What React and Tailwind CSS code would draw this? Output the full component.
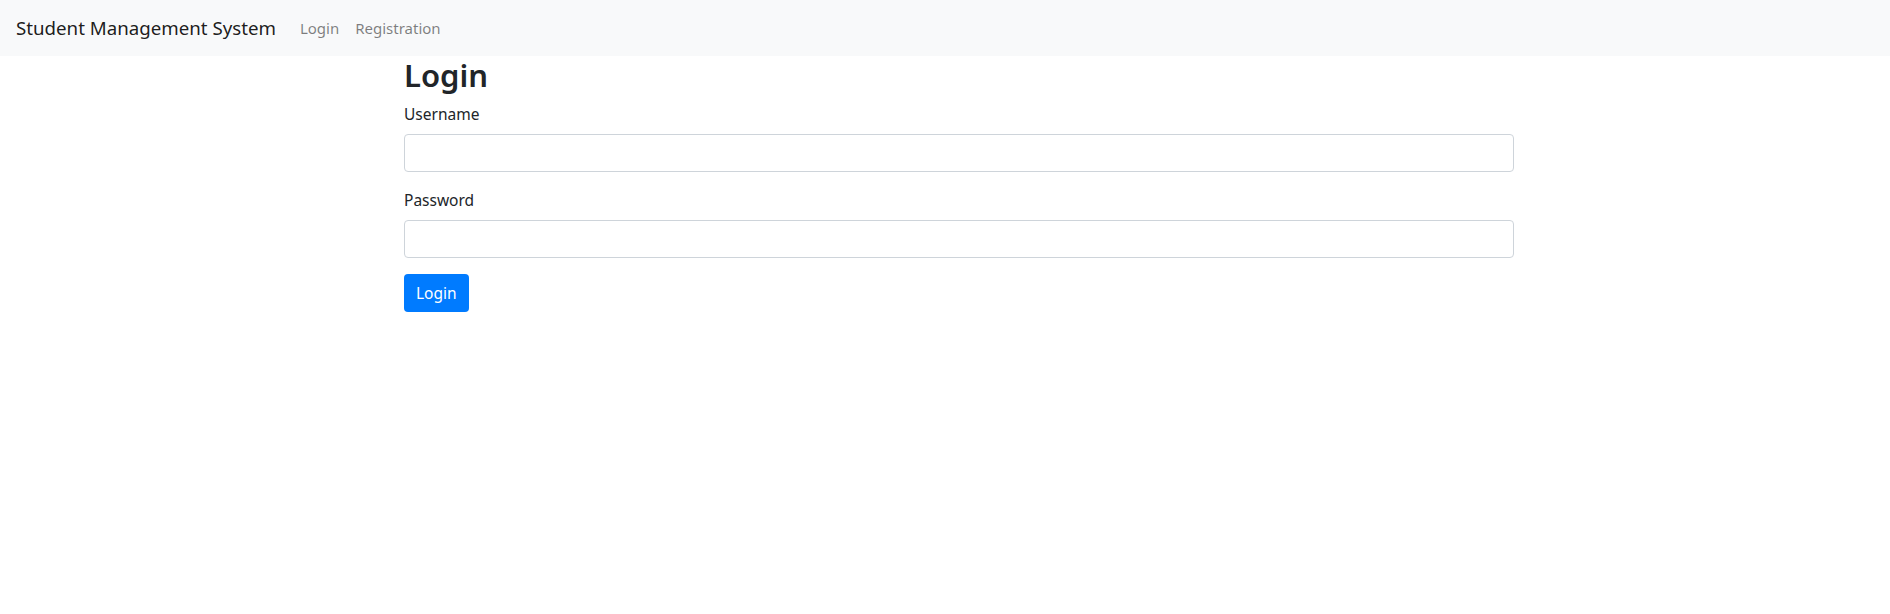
export default function App() {
  return (
    <div className="min-h-screen bg-white text-[#212529] font-['Segoe_UI','Noto_Sans',sans-serif] text-base">
      {/* Navbar */}
      <nav className="h-14 bg-[#f8f9fa] flex items-center px-4">
        <a href="#" className="text-[18.7px] leading-[30px] text-black/90 mr-4">
          Student Management System
        </a>
        <div className="flex">
          <a href="#" className="px-2 leading-6 text-[15px] text-black/50">Login</a>
          <a href="#" className="px-2 leading-6 text-[15px] text-black/50">Registration</a>
        </div>
      </nav>

      {/* Login form */}
      <div className="pl-[404px]">
        <div className="w-[1110px]">
          <h2 className="text-[31px] leading-[38px] font-semibold mb-2">Login</h2>
          <div className="mb-4">
            <label className="block leading-6 text-[15.5px] mb-2">Username</label>
            <input type="text" className="block w-full h-[38px] px-3 border border-[#ced4da] rounded" />
          </div>
          <div className="mb-4">
            <label className="block leading-6 text-[15.5px] mb-2">Password</label>
            <input type="password" className="block w-full h-[38px] px-3 border border-[#ced4da] rounded" />
          </div>
          <button className="h-[38px] px-3 bg-[#007bff] text-white rounded leading-6 text-[15.5px]">
            Login
          </button>
        </div>
      </div>
    </div>
  )
}
